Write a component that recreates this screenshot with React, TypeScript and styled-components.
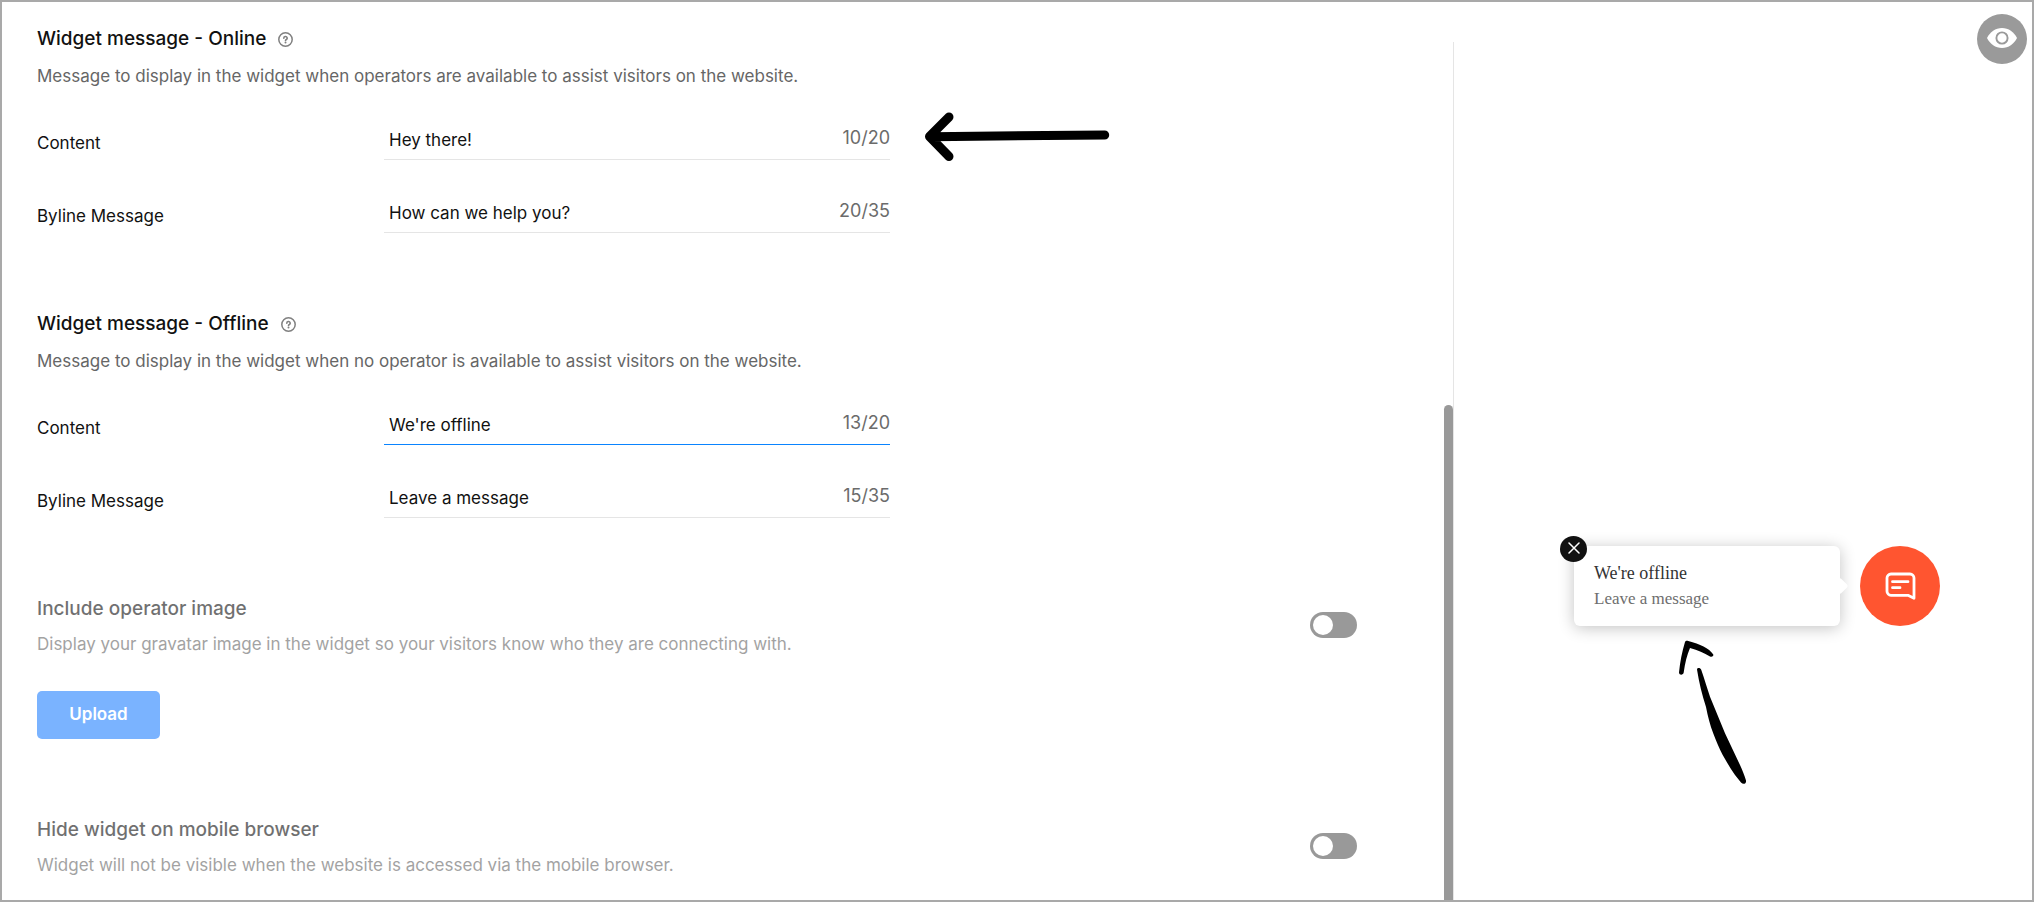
import React from "react";
import styled, { createGlobalStyle } from "styled-components";

const GlobalStyle = createGlobalStyle`
  *, *::before, *::after { box-sizing: border-box; }
  body {
    margin: 0;
    background: #fff;
    color: #111;
    font-family: Inter, "Liberation Sans", sans-serif;
    font-size: 17px;
    line-height: 24px;
  }
  h2, p { margin: 0; }
  button, input { font: inherit; color: inherit; }
`;

const Page = styled.main`
  display: grid;
  grid-template-columns: minmax(0, 1fr) 10px 578px;
  min-height: 100vh;
  border: 2px solid #a9a9a9;
`;

const Settings = styled.div`
  display: flex;
  flex-direction: column;
  gap: 79px;
  padding: 25px 87px 20px 35px;
`;

const Section = styled.section<{ $muted?: boolean }>`
  display: flex;
  flex-direction: column;
  align-items: ${(p) => (p.$muted ? "stretch" : "flex-start")};
`;

const TitleRow = styled.div`
  display: flex;
  align-items: center;
  gap: 12px;
  margin-bottom: 13px;
`;

const Title = styled.h2`
  font-size: 19px;
  font-weight: 500;
  line-height: 24px;
`;

const Description = styled.p`
  color: #666;
`;

const HelpButton = styled.button`
  display: flex;
  padding: 0;
  border: 0;
  background: none;
  color: #808080;
  cursor: pointer;
`;

const Fields = styled.div`
  display: flex;
  flex-direction: column;
  gap: 37px;
  width: 100%;
  margin-top: 36px;
`;

const FieldRow = styled.div`
  display: grid;
  grid-template-columns: 347px minmax(0, 506px);
  align-items: center;
`;

const FieldLabel = styled.label`
  padding-top: 2px;
`;

const FieldBox = styled.div<{ $active?: boolean }>`
  position: relative;
  display: flex;
  height: 36px;
  border-bottom: 1px solid ${(p) => (p.$active ? "#0a84ff" : "#e5e5e5")};
`;

const TextInput = styled.input`
  flex: 1;
  min-width: 0;
  padding: 0 5px 4px;
  border: 0;
  outline: 0;
  background: transparent;
`;

const Counter = styled.span`
  padding-top: 2px;
  color: #6b6b6b;
  font-size: 18px;
`;

const SideArrow = styled.svg`
  position: absolute;
  top: -24px;
  left: calc(100% + 30px);
`;

const ToggleRow = styled.div`
  display: flex;
  align-items: center;
  justify-content: space-between;
`;

const ToggleText = styled.label`
  display: flex;
  flex-direction: column;
  gap: 11px;
  opacity: 0.6;
`;

const Switch = styled.input`
  appearance: none;
  display: flex;
  align-items: center;
  width: 47px;
  height: 26px;
  margin: 0 0 3px;
  padding: 0 3px;
  border-radius: 13px;
  background: #999;

  &::before {
    content: "";
    width: 20px;
    height: 20px;
    border-radius: 50%;
    background: #fff;
  }
  &:checked {
    justify-content: flex-end;
  }
`;

const UploadButton = styled.button`
  align-self: flex-start;
  width: 123px;
  height: 48px;
  margin-top: 35px;
  padding: 0 0 2px;
  border: 0;
  border-radius: 5px;
  background: #7ab3ff;
  color: #fff;
  font-weight: 600;
`;

const ScrollRail = styled.div`
  display: flex;
  flex-direction: column;
  margin-top: 40px;
  border-right: 1px solid #e5e5e5;
`;

const RailSpace = styled.div`
  flex: 363;
`;

const RailThumb = styled.div`
  flex: 495;
  border-radius: 5px 5px 0 0;
  background: #999;
`;

const Preview = styled.aside`
  display: flex;
  flex-direction: column;
  align-items: flex-end;
  padding: 12px 5px;
`;

const EyeButton = styled.button`
  display: flex;
  align-items: center;
  justify-content: center;
  width: 50px;
  height: 50px;
  padding: 0 0 2px;
  border: 0;
  border-radius: 50%;
  background: #9a9a9a;
`;

const WidgetRow = styled.div`
  display: flex;
  align-items: center;
  gap: 20px;
  margin: 482px 87px 0 0;
`;

const Bubble = styled.div`
  position: relative;
  width: 266px;
  padding: 14px 20px;
  border-radius: 6px;
  background: #fff;
  box-shadow: 0 2px 16px rgba(0, 0, 0, 0.24);
  font-family: "Liberation Serif", serif;
  font-size: 18px;
  line-height: 26px;

  &::after {
    content: "";
    position: absolute;
    top: 34px;
    right: -6px;
    width: 12px;
    height: 12px;
    border-radius: 2px;
    background: #fff;
    transform: rotate(45deg);
  }
`;

const BubbleTitle = styled.p`
  color: #333;
`;

const BubbleText = styled.p`
  color: #6e6e6e;
  font-size: 17px;
`;

const CloseButton = styled.button`
  position: absolute;
  top: -10px;
  left: -14px;
  display: flex;
  align-items: center;
  justify-content: center;
  width: 27px;
  height: 26px;
  padding: 0 0 3px;
  border: 0;
  border-radius: 50%;
  background: #111;
`;

const PointerArrow = styled.svg`
  position: absolute;
  top: calc(100% + 12px);
  left: 102px;
`;

const ChatButton = styled.button`
  display: flex;
  align-items: center;
  justify-content: center;
  width: 80px;
  height: 80px;
  padding: 0;
  border: 0;
  border-radius: 50%;
  background: #ff5530;
`;

type FieldData = { id: string; label: string; value: string; count: string; active?: boolean; arrow?: boolean };

function Field({ id, label, value, count, active, arrow }: FieldData) {
  return (
    <FieldRow>
      <FieldLabel htmlFor={id}>{label}</FieldLabel>
      <FieldBox $active={active}>
        <TextInput id={id} type="text" defaultValue={value} />
        <Counter>{count}</Counter>
        {arrow && (
          <SideArrow width="195" height="66" viewBox="0 0 195 66" fill="none" stroke="#000" strokeWidth="9" strokeLinecap="round" strokeLinejoin="round" aria-hidden="true">
            <path d="M29 17 9.500 36.500 29 56.500M12 36.700 184.700 35" />
          </SideArrow>
        )}
      </FieldBox>
    </FieldRow>
  );
}

function MessageSection({ title, text, fields }: { title: string; text: string; fields: FieldData[] }) {
  return (
    <Section>
      <TitleRow>
        <Title>{title}</Title>
        <HelpButton type="button" aria-label={"Help: " + title}>
          <svg width="15" height="15" viewBox="0 0 15 15" fill="none" stroke="currentColor" strokeLinecap="round">
            <circle cx="7.500" cy="7.500" r="6.700" strokeWidth="1.500" />
            <path d="M5.800 6.200a1.700 1.600 0 1 1 2.600 1.300c-.6.3-.9.500-.9 1" strokeWidth="1.600" />
            <circle cx="7.500" cy="10.500" r="1" fill="currentColor" stroke="none" />
          </svg>
        </HelpButton>
      </TitleRow>
      <Description>{text}</Description>
      <Fields>
        {fields.map((f) => (
          <Field key={f.id} {...f} />
        ))}
      </Fields>
    </Section>
  );
}

function ToggleSetting({ id, title, text }: { id: string; title: string; text: string }) {
  return (
    <ToggleRow>
      <ToggleText htmlFor={id}>
        <Title>{title}</Title>
        <Description>{text}</Description>
      </ToggleText>
      <Switch id={id} type="checkbox" role="switch" />
    </ToggleRow>
  );
}

export default function App() {
  return (
    <>
      <GlobalStyle />
      <Page>
        <Settings>
          <MessageSection
            title="Widget message - Online"
            text="Message to display in the widget when operators are available to assist visitors on the website."
            fields={[
              { id: "online-content", label: "Content", value: "Hey there!", count: "10/20", arrow: true },
              { id: "online-byline", label: "Byline Message", value: "How can we help you?", count: "20/35" },
            ]}
          />
          <MessageSection
            title="Widget message - Offline"
            text="Message to display in the widget when no operator is available to assist visitors on the website."
            fields={[
              { id: "offline-content", label: "Content", value: "We're offline", count: "13/20", active: true },
              { id: "offline-byline", label: "Byline Message", value: "Leave a message", count: "15/35" },
            ]}
          />
          <Section $muted>
            <ToggleSetting
              id="operator-image"
              title="Include operator image"
              text="Display your gravatar image in the widget so your visitors know who they are connecting with."
            />
            <UploadButton type="button">Upload</UploadButton>
          </Section>
          <Section $muted>
            <ToggleSetting
              id="hide-mobile"
              title="Hide widget on mobile browser"
              text="Widget will not be visible when the website is accessed via the mobile browser."
            />
          </Section>
        </Settings>
        <ScrollRail>
          <RailSpace />
          <RailThumb />
        </ScrollRail>
        <Preview>
          <EyeButton type="button" aria-label="Preview">
            <svg width="30" height="20" viewBox="0 0 30 20">
              <path d="M0 10C3 4 8.500 0 15 0s12 4 15 10c-3 6-8.500 10-15 10S3 16 0 10z" fill="#fff" />
              <circle cx="15" cy="10" r="5.600" fill="none" stroke="#9a9a9a" strokeWidth="1.900" />
            </svg>
          </EyeButton>
          <WidgetRow>
            <Bubble>
              <BubbleTitle>We're offline</BubbleTitle>
              <BubbleText>Leave a message</BubbleText>
              <CloseButton type="button" aria-label="Close">
                <svg width="12" height="12" viewBox="0 0 12 12" stroke="#fff" strokeWidth="1.500" strokeLinecap="round">
                  <path d="m1 1 10 10M11 1 1 11" />
                </svg>
              </CloseButton>
              <PointerArrow width="76" height="150" viewBox="0 0 76 150" aria-hidden="true">
                <path d="M9 4C6 14 4 24 3 34.500c.2 3 4.300 2.800 4.700 0C9 25 11 17 14 10c8 2 14 5 20 8.500 2 .8 3.700-.3 3.300-2C33 10 24 6 12.300 3 10.500 2.500 9.500 3 9 4z" />
                <path d="M21 31.500c2 13 5 25 9 37.500 2 10 4 18 7.300 26.500 3 8 6 15 9.400 21.500 4 7 8 14 12.300 20l6 7.500c2.500 2.500 5.500 1 5-2-1.500-5-3.500-10-6-15.500L49 95.300 34 58.700C31 50 28.500 41 25.300 32c-1-2.500-4-2.500-4.300-.5z" />
              </PointerArrow>
            </Bubble>
            <ChatButton type="button" aria-label="Open chat">
              <svg width="32" height="30" viewBox="0 0 32 30" fill="none" stroke="#fff" strokeLinecap="round" strokeLinejoin="round">
                <path d="M7 3H26a4 4 0 0 1 4 4V27.300L24 24.300H7a4 4 0 0 1-4-4V7a4 4 0 0 1 4-4z" strokeWidth="2.800" />
                <path d="M8.500 10.700H24M8.500 16.700h7.500" strokeWidth="2.800" />
              </svg>
            </ChatButton>
          </WidgetRow>
        </Preview>
      </Page>
    </>
  );
}
